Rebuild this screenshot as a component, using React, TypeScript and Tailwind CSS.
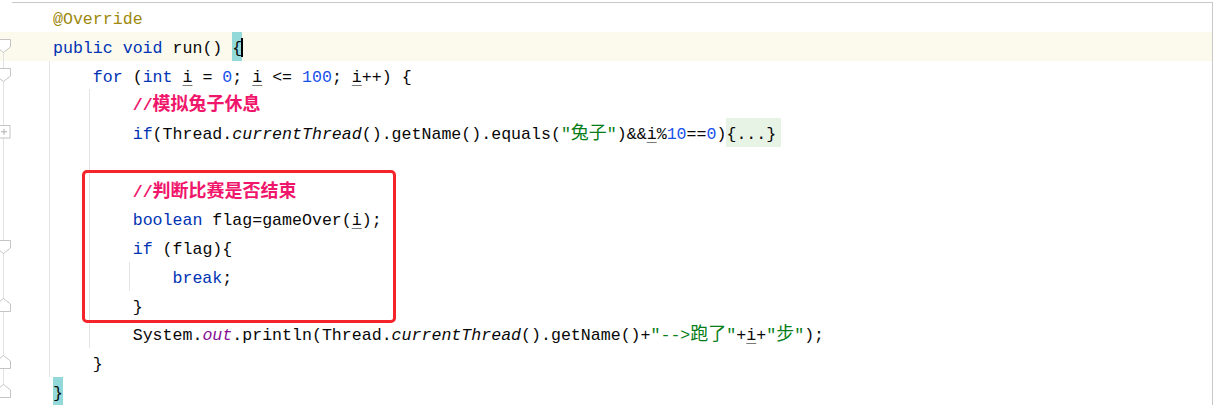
import type { ReactNode } from "react";

type Line = {
  indent: number;
  code: ReactNode;
  marker?: "open" | "close" | "collapsed";
  guides?: number[];
  current?: boolean;
};

const Kw = ({ children }: { children: ReactNode }) => (
  <span className="text-[#0033b3]">{children}</span>
);
const Num = ({ children }: { children: ReactNode }) => (
  <span className="text-[#1750eb]">{children}</span>
);
const Str = ({ children }: { children: ReactNode }) => (
  <span className="text-[#067d17]">{children}</span>
);
const Cjk = ({ children }: { children: ReactNode }) => (
  <span className="text-[18px] leading-none">{children}</span>
);
const Var = () => (
  <span className="underline decoration-[#7a7a7a] underline-offset-[3px]">i</span>
);
const Comment = ({ text }: { text: string }) => (
  <span className="font-bold text-[#f0166b]">
    //<Cjk>{text}</Cjk>
  </span>
);
// full-row background block around a few characters (brace match, folded region)
const Mark = ({ bg, children }: { bg: string; children: ReactNode }) => (
  <span className={`relative -mt-[6px] inline-block pt-[6px] ${bg}`}>{children}</span>
);

const FoldMarker = ({ kind }: { kind: "open" | "close" | "collapsed" }) => {
  if (kind === "collapsed") {
    return (
      <svg width="12" height="14" viewBox="0 0 12 14" className="absolute left-0 top-1/2 -translate-y-1/2">
        <rect x="-2.5" y="0.5" width="12.5" height="12.5" fill="#fff" stroke="#c4c4c4" />
        <path d="M1 6.75H7M4 3.75V9.75" stroke="#b0b0b0" />
      </svg>
    );
  }
  const d =
    kind === "open"
      ? "M-3.5 0.5H10.5V8L3.5 13.5L-3.5 8Z"
      : "M-3.5 13.5H10.5V6L3.5 0.5L-3.5 6Z";
  return (
    <svg width="12" height="14" viewBox="0 0 12 14" className="absolute left-0 top-1/2 -translate-y-1/2">
      <path d={d} fill="#fff" stroke="#c4c4c4" />
    </svg>
  );
};

const lines: Line[] = [
  { indent: 0, code: <span className="text-[#9e880d]">@Override</span> },
  {
    indent: 0,
    current: true,
    marker: "open",
    code: (
      <>
        <Kw>public void</Kw> run(){" "}
        <Mark bg="bg-[#93d9d9]">
          {"{"}
          <span className="absolute -right-px top-[6px] h-[19px] w-[2px] bg-black" />
        </Mark>
      </>
    ),
  },
  {
    indent: 4,
    marker: "open",
    guides: [49],
    code: (
      <>
        <Kw>for</Kw> (<Kw>int</Kw> <Var /> = <Num>0</Num>; <Var /> &lt;= <Num>100</Num>; <Var />++) {"{"}
      </>
    ),
  },
  { indent: 8, guides: [49, 89], code: <Comment text="模拟兔子休息" /> },
  {
    indent: 8,
    marker: "collapsed",
    guides: [49, 89],
    code: (
      <>
        <Kw>if</Kw>(Thread.<span className="italic">currentThread</span>().getName().equals(<Str>"<Cjk>兔子</Cjk>"</Str>)&amp;&amp;<Var />%<Num>10</Num>==<Num>0</Num>)
        <Mark bg="bg-[#e7f3e4] pr-[5px]">{"{...}"}</Mark>
      </>
    ),
  },
  { indent: 0, guides: [49, 89], code: "" },
  { indent: 8, guides: [49, 89], code: <Comment text="判断比赛是否结束" /> },
  {
    indent: 8,
    guides: [49, 89],
    code: (
      <>
        <Kw>boolean</Kw> flag=gameOver(<Var />);
      </>
    ),
  },
  {
    indent: 8,
    marker: "open",
    guides: [49, 89],
    code: (
      <>
        <Kw>if</Kw> (flag){"{"}
      </>
    ),
  },
  {
    indent: 12,
    guides: [49, 89, 129],
    code: (
      <>
        <Kw>break</Kw>;
      </>
    ),
  },
  { indent: 8, marker: "close", guides: [49, 89], code: "}" },
  {
    indent: 8,
    guides: [49, 89],
    code: (
      <>
        System.<span className="italic text-[#871094]">out</span>.println(Thread.<span className="italic">currentThread</span>().getName()+<Str>"--&gt;<Cjk>跑了</Cjk>"</Str>+<Var />+<Str>"<Cjk>步</Cjk>"</Str>);
      </>
    ),
  },
  { indent: 4, marker: "close", guides: [49], code: "}" },
  {
    indent: 0,
    marker: "close",
    code: <Mark bg="bg-[#93d9d9]">{"}"}</Mark>,
  },
];

export default function App() {
  return (
    <div className="relative flex h-[405px] w-[1214px] overflow-hidden bg-white font-['Liberation_Mono','Noto_Sans_CJK_SC',monospace] text-[16.6px] text-[#080808]">
      {/* gutter with fold markers */}
      <div className="w-[12px] shrink-0 pt-[3px]">
        {lines.map((line, i) => (
          <div
            key={i}
            className={`relative flex h-[28.75px] ${line.current ? "bg-[#fcfaed]" : ""}`}
          >
            {i >= 1 && (
              <div
                className={`ml-[3px] border-l border-[#e2e2e2] ${i === 1 ? "mt-[14px] h-[15px]" : i === 13 ? "h-[14px]" : "h-full"}`}
              />
            )}
            {line.marker && <FoldMarker kind={line.marker} />}
          </div>
        ))}
      </div>

      {/* editor */}
      <div className="mr-[1px] mt-[2px] flex-1 border-r border-t border-[#c8c8c8]">
        {lines.map((line, i) => (
          <div
            key={i}
            className={`relative h-[28.75px] whitespace-pre pl-[41px] pt-[6px] leading-[22.75px] ${line.current ? "bg-[#fcfaed]" : ""}`}
          >
            {(line.guides ?? []).map((g) => (
              <span key={g} className="absolute top-0 h-full w-px bg-[#e4e4e4]" style={{ left: g - 12 }} />
            ))}
            {" ".repeat(line.indent)}
            {line.code}
          </div>
        ))}
      </div>

      {/* highlight frame around the selected block */}
      <div className="pointer-events-none absolute left-[82px] top-[170px] h-[153px] w-[314px] rounded-[5px] border-[3px] border-[#f5242b]" />
    </div>
  );
}
